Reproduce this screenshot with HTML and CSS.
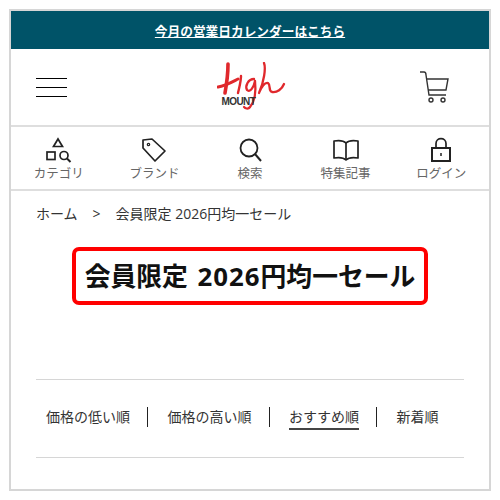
FILE: index.html
```html
<!DOCTYPE html>
<html lang="ja">
  <head>
    <meta charset="utf-8" />
    <title>会員限定 2026円均一セール</title>
    <link rel="stylesheet" href="styles.css">
  </head>

  <body>
    <div class="frame">
      <div class="banner"><a href="#">今月の営業日カレンダーはこちら</a></div>

      <header class="header">
        <div class="burger"><span></span><span></span><span></span></div>
        <div class="logo">
          <svg width="70" height="52" viewBox="0 0 70 52" fill="none" stroke="#e0282c" stroke-linecap="round" stroke-linejoin="round">
            <path d="M11 2 C11 10 10 20 8 31" stroke-width="3.6"/>
            <path d="M1 25 C8 24 15 20 21 17" stroke-width="3"/>
            <path d="M24 14 C24 20 22 26 21 31" stroke-width="2.4"/>
            <path d="M37 17 C31 17 28 24 30 28 C33 31 37 25 38 19 C39 28 39 38 33 45 C31 48 28 46 27 45" stroke-width="2.3"/>
            <path d="M47 1 C49 6 47 20 42 31 C44 25 48 20 51 21 C54 23 51 29 55 30 C60 31 65 27 67 22" stroke-width="2.3"/>
          </svg>
          <span class="mount">MOUNT</span>
        </div>
        <svg class="cart" width="30" height="33" viewBox="0 0 30 33" fill="none" stroke="#333" stroke-width="1.4">
          <path d="M1 1 H5 C6 1 7 2 7 4 L10 24 H27"/>
          <path d="M7 8 H29 L27 19 H9"/>
          <circle cx="12" cy="29" r="2"/>
          <circle cx="24" cy="29" r="2"/>
        </svg>
      </header>

      <nav class="nav">
        <a class="nav-item" href="#">
          <svg width="28" height="26" viewBox="0 0 28 26" fill="none" stroke="#222" stroke-width="1.7">
            <path d="M13 2 L17.5 9.5 H8.5 Z"/>
            <rect x="2" y="15" width="8" height="7.5"/>
            <circle cx="19" cy="18.5" r="4"/>
            <path d="M22 21.5 L25.5 25" stroke-width="2"/>
          </svg>
          <span>カテゴリ</span>
        </a>
        <a class="nav-item" href="#">
          <svg width="28" height="26" viewBox="0 0 28 26" fill="none" stroke="#222" stroke-width="1.7" stroke-linejoin="round">
            <path d="M3 3 L12 2 L25 14 L15 24 L3 11 Z"/>
            <circle cx="8.5" cy="7.5" r="1.2" stroke-width="1.2"/>
          </svg>
          <span>ブランド</span>
        </a>
        <a class="nav-item" href="#">
          <svg width="28" height="26" viewBox="0 0 28 26" fill="none" stroke="#222" stroke-width="1.8">
            <circle cx="13" cy="11" r="8.5"/>
            <path d="M19 17 L25 24" stroke-width="2"/>
          </svg>
          <span>検索</span>
        </a>
        <a class="nav-item" href="#">
          <svg width="30" height="26" viewBox="0 0 30 26" fill="none" stroke="#222" stroke-width="1.7" stroke-linejoin="round">
            <path d="M15 6 C13 4 9 3 3 4 V21 C9 20 13 21 15 23 C17 21 21 20 27 21 V4 C21 3 17 4 15 6 Z"/>
            <path d="M15 6 V23"/>
          </svg>
          <span>特集記事</span>
        </a>
        <a class="nav-item" href="#">
          <svg width="28" height="26" viewBox="0 0 28 26" fill="none" stroke="#222" stroke-width="1.7">
            <path d="M9 11 V6.5 C9 0 19 0 19 6.5 V11"/>
            <rect x="5" y="11" width="18" height="13" stroke-width="2"/>
            <path d="M14 16 V19" stroke-width="1.5"/>
          </svg>
          <span>ログイン</span>
        </a>
      </nav>

      <main class="content">
        <div class="crumbs">
          <a href="#">ホーム</a>
          <span class="sep">&gt;</span>
          <span>会員限定 2026円均一セール</span>
        </div>

        <div class="title-wrap">
          <h1 class="title">会員限定 <span class="num">2026</span>円均一セール</h1>
        </div>

        <div class="sort">
          <a href="#">価格の低い順</a>
          <a href="#">価格の高い順</a>
          <a href="#" class="current"><span>おすすめ順</span></a>
          <a href="#">新着順</a>
        </div>
      </main>
    </div>
  </body>
</html>
```

FILE: styles.css
```css
* {
  box-sizing: border-box;
}

html,
body {
  margin: 0;
  padding: 0;
}

body {
  padding: 9px;
  background: #fff;
  color: #222;
  font-family: "Open Sans", "Noto Sans CJK JP", sans-serif;
}

a {
  color: inherit;
  text-decoration: none;
}

.frame {
  height: 482px;
  border: 2px solid #d6d6d6;
  overflow: hidden;
}

.banner {
  height: 38px;
  display: flex;
  align-items: center;
  justify-content: center;
  background: #005368;
  color: #fff;
  font-size: 12.7px;
  font-weight: bold;
}

.banner a {
  text-decoration: underline;
}

.header {
  height: 78px;
  display: flex;
  align-items: center;
  justify-content: space-between;
  padding: 1px 40px 0 25px;
  border-bottom: 2px solid #dedede;
}

.burger {
  width: 31px;
  display: flex;
  flex-direction: column;
  gap: 8px;
}

.burger span {
  height: 1px;
  background: #000;
}

.logo {
  position: relative;
  width: 70px;
  height: 52px;
  margin-left: 17px;
}

.mount {
  position: absolute;
  left: 5px;
  top: 34px;
  font-family: "Liberation Sans", sans-serif;
  font-size: 10px;
  font-weight: bold;
  letter-spacing: -0.6px;
  color: #333;
}

.nav {
  height: 64px;
  display: grid;
  grid-template-columns: repeat(5, 1fr);
  border-bottom: 2px solid #dedede;
}

.nav-item {
  display: flex;
  flex-direction: column;
  align-items: center;
  padding-top: 10px;
  color: #666;
  font-size: 12.5px;
  line-height: 21px;
}

.nav-item svg {
  display: block;
}

.content {
  padding: 0 25px;
}

.crumbs {
  display: flex;
  align-items: center;
  height: 44px;
  font-size: 14px;
  color: #333;
}

.sep {
  margin: 0 15px 0 15px;
}

.title-wrap {
  display: flex;
  justify-content: center;
  margin-top: 12px;
}

.title {
  margin: 0;
  width: 356px;
  height: 58px;
  line-height: 50px;
  text-align: center;
  font-size: 25.8px;
  word-spacing: 3px;
  font-weight: bold;
  color: #111;
  border: 4px solid #f00;
  border-radius: 7px;
  white-space: nowrap;
}

.num {
  letter-spacing: 1px;
}

.sort {
  margin-top: 74px;
  height: 79px;
  display: flex;
  align-items: center;
  padding: 0 0 4px 10px;
  border-top: 1px solid #d6d6d6;
  border-bottom: 1px solid #d6d6d6;
  font-size: 14px;
  color: #333;
  white-space: nowrap;
}

.sort a {
  height: 20px;
  line-height: 20px;
  padding-right: 17px;
  margin-right: 19.5px;
  border-right: 1.5px solid #222;
}

.sort a:last-child {
  margin-right: 0;
  padding-right: 0;
  border-right: none;
}

.current span {
  display: inline-block;
  height: 23px;
  border-bottom: 2px solid #444;
}
```
